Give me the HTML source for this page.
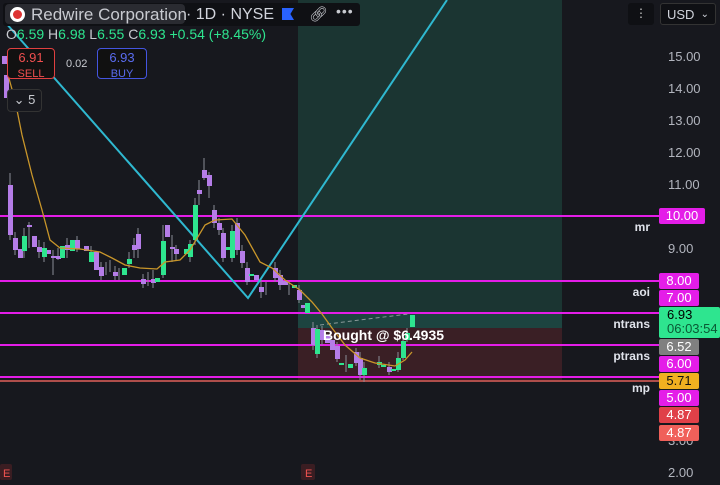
<!DOCTYPE html>
<html><head><style>
body{margin:0;width:720px;height:485px;background:#17181e;overflow:hidden;font-family:"Liberation Sans",sans-serif;position:relative}
.ax{position:absolute;left:668px;color:#b2b5be;font-size:13px}
.tag{position:absolute;left:659px;width:40px;height:16px;font-size:13px;line-height:16px;text-align:center;color:#fff;border-radius:2px}
.lbl{position:absolute;color:#e0e3eb;font-size:12px;font-weight:bold;text-align:right;right:70px}
</style></head><body>
<svg width="720" height="485" style="position:absolute;left:0;top:0">
<rect x="298" y="0" width="264" height="328" fill="#1b3532"/>
<rect x="298" y="313" width="264" height="15" fill="#1d4440"/>
<rect x="298" y="328" width="264" height="52" fill="#3a1f25"/>
<line x1="0" y1="216" x2="660" y2="216" stroke="#e41de8" stroke-width="2"/>
<line x1="0" y1="281" x2="660" y2="281" stroke="#e41de8" stroke-width="2"/>
<line x1="0" y1="313" x2="660" y2="313" stroke="#e41de8" stroke-width="2"/>
<line x1="0" y1="345" x2="660" y2="345" stroke="#e41de8" stroke-width="2"/>
<line x1="0" y1="377" x2="660" y2="377" stroke="#e41de8" stroke-width="2"/>
<line x1="0" y1="381" x2="660" y2="381" stroke="#e0605a" stroke-width="1.5"/>
<line x1="320" y1="325" x2="408" y2="314" stroke="#8a9a9a" stroke-dasharray="4 3"/>
<polyline points="5,22 248,298 447,0" fill="none" stroke="#2fb8d0" stroke-width="2"/>
<g stroke="#8a8d96" stroke-width="1">
<line x1="10" y1="173" x2="10" y2="240"/><line x1="15" y1="232" x2="15" y2="255"/><line x1="24" y1="228" x2="24" y2="258"/>
<line x1="29" y1="222" x2="29" y2="248"/><line x1="39" y1="240" x2="39" y2="258"/><line x1="44" y1="242" x2="44" y2="262"/>
<line x1="53" y1="250" x2="53" y2="275"/><line x1="58" y1="248" x2="58" y2="260"/><line x1="67" y1="238" x2="67" y2="258"/>
<line x1="77" y1="236" x2="77" y2="252"/><line x1="91" y1="246" x2="91" y2="262"/><line x1="101" y1="262" x2="101" y2="280"/>
<line x1="106" y1="262" x2="106" y2="275"/><line x1="110" y1="260" x2="110" y2="272"/><line x1="115" y1="266" x2="115" y2="280"/>
<line x1="119" y1="268" x2="119" y2="280"/><line x1="129" y1="252" x2="129" y2="268"/><line x1="134" y1="238" x2="134" y2="258"/>
<line x1="138" y1="228" x2="138" y2="258"/><line x1="143" y1="274" x2="143" y2="288"/><line x1="148" y1="272" x2="148" y2="286"/>
<line x1="153" y1="270" x2="153" y2="288"/><line x1="163" y1="225" x2="163" y2="278"/><line x1="172" y1="235" x2="172" y2="262"/>
<line x1="176" y1="245" x2="176" y2="260"/><line x1="190" y1="240" x2="190" y2="262"/><line x1="195" y1="198" x2="195" y2="245"/>
<line x1="199" y1="180" x2="199" y2="205"/><line x1="204" y1="158" x2="204" y2="180"/><line x1="209" y1="172" x2="209" y2="198"/>
<line x1="214" y1="205" x2="214" y2="228"/><line x1="219" y1="218" x2="219" y2="235"/><line x1="223" y1="228" x2="223" y2="262"/>
<line x1="232" y1="225" x2="232" y2="262"/><line x1="237" y1="218" x2="237" y2="255"/><line x1="242" y1="245" x2="242" y2="268"/>
<line x1="247" y1="262" x2="247" y2="285"/><line x1="261" y1="280" x2="261" y2="298"/><line x1="266" y1="282" x2="266" y2="295"/>
<line x1="275" y1="262" x2="275" y2="282"/><line x1="280" y1="270" x2="280" y2="290"/><line x1="289" y1="282" x2="289" y2="295"/>
<line x1="299" y1="285" x2="299" y2="303"/><line x1="313" y1="322" x2="313" y2="350"/><line x1="317" y1="325" x2="317" y2="358"/>
<line x1="322" y1="326" x2="322" y2="345"/><line x1="337" y1="342" x2="337" y2="362"/><line x1="346" y1="355" x2="346" y2="372"/>
<line x1="356" y1="348" x2="356" y2="366"/><line x1="360" y1="352" x2="360" y2="380"/><line x1="364" y1="362" x2="364" y2="382"/>
<line x1="379" y1="356" x2="379" y2="368"/><line x1="389" y1="362" x2="389" y2="375"/><line x1="398" y1="352" x2="398" y2="372"/>
<line x1="403" y1="336" x2="403" y2="360"/><line x1="407" y1="328" x2="407" y2="342"/>
</g>
<g>
<g fill="#b57de8">
<rect x="2" y="56" width="5" height="8"/><rect x="4" y="75" width="5" height="23"/>
<rect x="8" y="185" width="5" height="50"/><rect x="13" y="238" width="5" height="12"/><rect x="18" y="249" width="5" height="9"/>
<rect x="27" y="225" width="5" height="2"/><rect x="32" y="236" width="5" height="11"/><rect x="37" y="247" width="5" height="5"/>
<rect x="46" y="250" width="5" height="4"/><rect x="51" y="256" width="5" height="2"/><rect x="56" y="256" width="5" height="3"/>
<rect x="65" y="245" width="5" height="5"/><rect x="75" y="240" width="5" height="9"/><rect x="84" y="246" width="5" height="5"/>
<rect x="94" y="252" width="5" height="18"/><rect x="99" y="267" width="5" height="9"/><rect x="113" y="272" width="5" height="4"/>
<rect x="132" y="245" width="5" height="5"/><rect x="136" y="234" width="5" height="15"/><rect x="141" y="279" width="5" height="5"/>
<rect x="151" y="279" width="5" height="4"/><rect x="165" y="225" width="5" height="12"/><rect x="170" y="247" width="5" height="2"/>
<rect x="174" y="249" width="5" height="5"/><rect x="197" y="190" width="5" height="4"/><rect x="202" y="170" width="5" height="8"/>
<rect x="207" y="175" width="5" height="11"/><rect x="212" y="210" width="5" height="13"/><rect x="217" y="223" width="5" height="7"/>
<rect x="221" y="233" width="5" height="25"/><rect x="235" y="223" width="5" height="27"/><rect x="240" y="251" width="5" height="12"/>
<rect x="245" y="268" width="5" height="14"/><rect x="254" y="275" width="5" height="5"/><rect x="259" y="287" width="5" height="5"/>
<rect x="273" y="268" width="5" height="10"/><rect x="278" y="275" width="5" height="10"/><rect x="283" y="281" width="5" height="4"/>
<rect x="297" y="290" width="5" height="10"/><rect x="301" y="305" width="5" height="3"/><rect x="311" y="328" width="5" height="17"/>
<rect x="320" y="330" width="5" height="10"/><rect x="325" y="335" width="5" height="8"/><rect x="330" y="340" width="5" height="10"/>
<rect x="335" y="346" width="5" height="13"/><rect x="354" y="352" width="5" height="11"/><rect x="358" y="358" width="5" height="17"/>
<rect x="387" y="367" width="5" height="5"/>
</g>
<g fill="#2ee58f">
<rect x="22" y="236" width="5" height="15"/><rect x="42" y="248" width="5" height="9"/><rect x="60" y="246" width="5" height="12"/>
<rect x="70" y="240" width="5" height="11"/><rect x="89" y="252" width="5" height="10"/><rect x="122" y="268" width="5" height="7"/>
<rect x="127" y="259" width="5" height="5"/><rect x="155" y="278" width="5" height="4"/><rect x="161" y="241" width="5" height="34"/>
<rect x="184" y="249" width="5" height="5"/><rect x="188" y="244" width="5" height="13"/><rect x="193" y="205" width="5" height="35"/>
<rect x="226" y="247" width="5" height="3"/><rect x="230" y="231" width="5" height="27"/><rect x="249" y="274" width="5" height="2"/>
<rect x="292" y="285" width="5" height="3"/><rect x="305" y="303" width="5" height="10"/><rect x="315" y="329" width="5" height="25"/>
<rect x="339" y="363" width="5" height="2"/><rect x="348" y="364" width="5" height="4"/><rect x="362" y="368" width="5" height="7"/>
<rect x="377" y="362" width="5" height="3"/><rect x="381" y="365" width="5" height="2"/><rect x="391" y="369" width="5" height="2"/>
<rect x="396" y="358" width="5" height="12"/><rect x="401" y="341" width="5" height="17"/><rect x="405" y="333" width="5" height="7"/>
<rect x="410" y="315" width="5" height="12"/>
</g></g>
<polyline points="8,75 15,100 22,135 32,175 42,210 50,240 60,248 80,249 100,252 112,258 125,265 140,268 157,269 165,262 180,260 190,250 205,225 215,220 232,219 245,235 260,262 272,268 285,280 300,290 312,302 322,314 332,328 345,345 360,358 375,363 395,366 405,360 412,352" fill="none" stroke="#c9962a" stroke-width="1.3"/>
<rect x="0" y="464" width="12" height="16" rx="2" fill="#3a1d22"/><text x="3" y="477" fill="#ef5350" font-size="11" font-family="Liberation Sans">E</text>
<rect x="301" y="464" width="14" height="16" rx="2" fill="#3a1d22"/><text x="305" y="477" fill="#ef5350" font-size="11" font-family="Liberation Sans">E</text>
</svg>
<div style="position:absolute;left:3px;top:3px;width:357px;height:23px;background:#0f1014;border-radius:3px"></div>
<div style="position:absolute;left:5px;top:4px;width:180px;height:20px;background:#2a2b31;border-radius:4px"></div>
<div style="position:absolute;left:10px;top:7px;width:15px;height:15px;border-radius:50%;background:#fff"><div style="margin:3px;width:9px;height:9px;border-radius:50%;background:#d33"></div></div>
<div style="position:absolute;left:31px;top:5px;color:#c8cad0;font-size:17px">Redwire Corporation</div>
<div style="position:absolute;left:186px;top:6px;color:#d1d4dc;font-size:16px">· 1D · NYSE</div>
<div style="position:absolute;left:282px;top:8px;width:12px;height:12px;background:#2962ff;clip-path:polygon(0 0,100% 0,70% 50%,100% 100%,0 100%)"></div>
<div style="position:absolute;left:309px;top:5px;color:#c8cad0;font-size:15px">&#x1F517;&#xFE0E;</div>
<div style="position:absolute;left:336px;top:3px;color:#c8cad0;font-size:14px;letter-spacing:1px">•••</div>
<div style="position:absolute;left:628px;top:3px;width:26px;height:22px;background:#0f1014;border-radius:3px;color:#ccc;font-size:12px;text-align:center;line-height:20px">⋮</div>
<div style="position:absolute;left:660px;top:3px;width:56px;height:22px;background:#0f1014;border:1px solid #333;border-radius:3px;color:#d1d4dc;font-size:13px;line-height:22px;padding-left:6px;box-sizing:border-box">USD <span style="float:right;margin-right:6px;font-size:10px">⌄</span></div>
<div style="position:absolute;left:6px;top:26px;font-size:14px;color:#2ee58f"><span style="color:#c8cad0">O</span>6.59 <span style="color:#c8cad0">H</span>6.98 <span style="color:#c8cad0">L</span>6.55 <span style="color:#c8cad0">C</span>6.93 +0.54 (+8.45%)</div>
<div style="position:absolute;left:7px;top:48px;width:48px;height:31px;border:1px solid #e04040;border-radius:4px;background:#111;color:#ef4f4f;text-align:center;font-size:13px;line-height:15px;box-sizing:border-box;padding-top:1px">6.91<br><span style="font-size:11px">SELL</span></div>
<div style="position:absolute;left:66px;top:58px;color:#c8cad0;font-size:11px">0.02</div>
<div style="position:absolute;left:97px;top:48px;width:50px;height:31px;border:1px solid #4455e0;border-radius:4px;background:#111;color:#5a6cf0;text-align:center;font-size:13px;line-height:15px;box-sizing:border-box;padding-top:1px">6.93<br><span style="font-size:11px">BUY</span></div>
<div style="position:absolute;left:7px;top:89px;width:33px;height:21px;border:1px solid #333;border-radius:4px;background:#17181e;color:#c8cad0;font-size:13px;line-height:20px;text-align:center">⌄ 5</div>
<div class="ax" style="top:49px">15.00</div><div class="ax" style="top:81px">14.00</div><div class="ax" style="top:113px">13.00</div>
<div class="ax" style="top:145px">12.00</div><div class="ax" style="top:177px">11.00</div><div class="ax" style="top:241px">9.00</div>
<div class="ax" style="top:433px">3.00</div><div class="ax" style="top:465px">2.00</div>
<div class="tag" style="top:208px;width:46px;background:#e41de8">10.00</div>
<div class="tag" style="top:273px;background:#e41de8">8.00</div>
<div class="tag" style="top:290px;background:#e41de8">7.00</div>
<div class="tag" style="top:307px;width:61px;height:31px;background:#2ee58f;color:#000;text-align:left;padding-left:8px;box-sizing:border-box;line-height:14px;padding-top:1px">6.93<br><span style="color:#0a5a35">06:03:54</span></div>
<div class="tag" style="top:339px;background:#808080">6.52</div>
<div class="tag" style="top:356px;background:#e41de8">6.00</div>
<div class="tag" style="top:373px;background:#f0b020;color:#111">5.71</div>
<div class="tag" style="top:390px;background:#e41de8">5.00</div>
<div class="tag" style="top:407px;background:#e04048">4.87</div>
<div class="tag" style="top:425px;background:#f0605a">4.87</div>
<div class="lbl" style="top:220px">mr</div><div class="lbl" style="top:285px">aoi</div>
<div class="lbl" style="top:317px">ntrans</div><div class="lbl" style="top:349px">ptrans</div><div class="lbl" style="top:381px">mp</div>
<div style="position:absolute;left:323px;top:327px;color:#fff;font-size:14px;font-weight:bold">Bought @ $6.4935</div>
</body></html>
